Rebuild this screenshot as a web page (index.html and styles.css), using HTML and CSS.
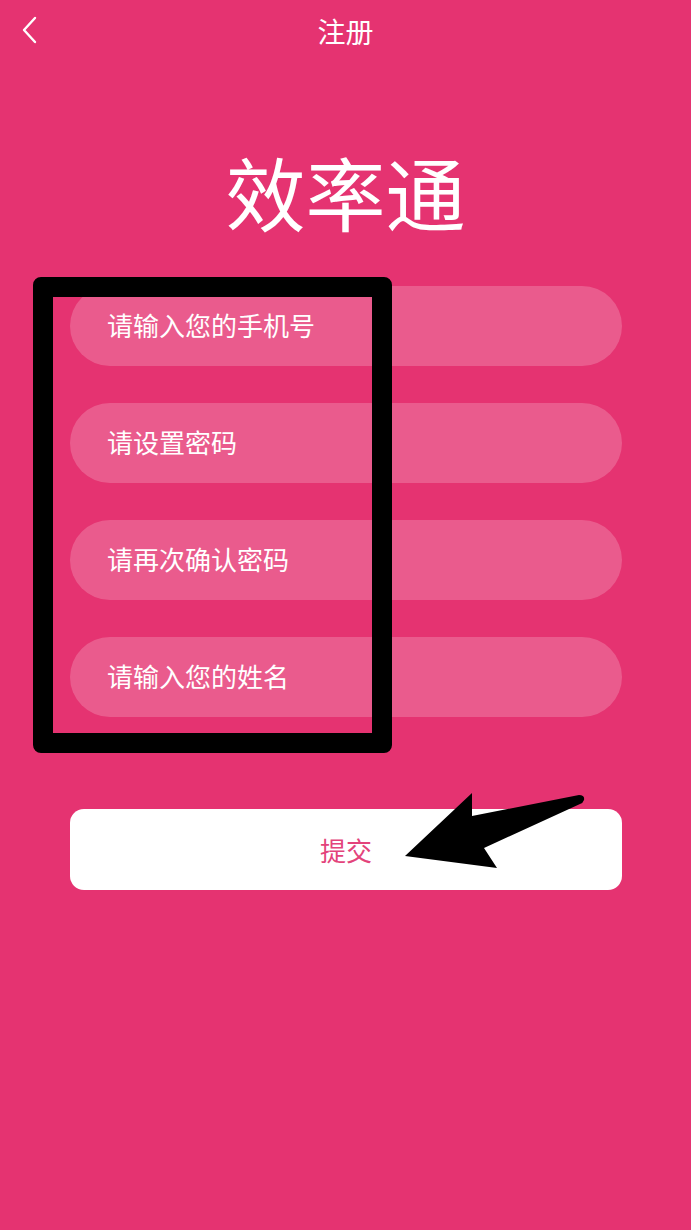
FILE: index.html
```html
<!DOCTYPE html>
<html lang="zh">
<head>
<meta charset="utf-8">
<link rel="stylesheet" href="styles.css">
</head>
<body>
<div class="page">
  <header class="topbar">
    <span class="back">
      <svg width="16" height="28" viewBox="0 0 16 28"><path d="M14 2 L3 14 L14 26" fill="none" stroke="#fff" stroke-width="2.4" stroke-linecap="round" stroke-linejoin="round"/></svg>
    </span>
    <h1 class="topbar-title">注册</h1>
  </header>
  <div class="brand">效率通</div>
  <form class="form">
    <input class="field" type="text" placeholder="请输入您的手机号">
    <input class="field" type="password" placeholder="请设置密码">
    <input class="field" type="password" placeholder="请再次确认密码">
    <input class="field" type="text" placeholder="请输入您的姓名">
    <button class="submit" type="button">提交</button>
  </form>
  <div class="mark-box"></div>
  <svg class="mark-arrow" width="691" height="1230" viewBox="0 0 691 1230"><path d="M405 856 L472 793 L472 816 L579 795 Q585 795 584 800 Q583 803 580 804 L484 848 L497 868 Z" fill="#000"/></svg>
</div>
</body>
</html>
```
FILE: styles.css
```css
html, body {
  margin: 0;
  padding: 0;
}
body {
  background: #e53371;
  font-family: "Noto Sans CJK SC", "Noto Sans", sans-serif;
  color: #fff;
}
.page {
  position: relative;
  width: 691px;
  height: 1230px;
  overflow: hidden;
}
.topbar {
  position: relative;
  height: 62px;
  display: flex;
  align-items: center;
  justify-content: center;
}
.back {
  position: absolute;
  left: 21px;
  top: 16px;
  display: flex;
}
.topbar-title {
  margin: 0;
  font-size: 28px;
  font-weight: 400;
  line-height: 1;
}
.brand {
  margin-top: 88px;
  text-align: center;
  font-size: 80px;
  line-height: 80px;
  height: 80px;
}
.form {
  margin: 56px 69px 0 70px;
  display: flex;
  flex-direction: column;
  gap: 37px;
}
.field {
  box-sizing: border-box;
  height: 80px;
  width: 100%;
  border: 0;
  border-radius: 40px;
  background: rgba(255, 255, 255, 0.2);
  padding: 0 0 3px 37px;
  font-family: inherit;
  font-size: 26px;
  color: #fff;
  outline: none;
}
.field::placeholder {
  color: #fff;
  opacity: 1;
}
.submit {
  margin-top: 55px;
  height: 81px;
  border: 0;
  border-radius: 14px;
  background: #fff;
  color: #e3437b;
  font-family: inherit;
  font-size: 26px;
}
.mark-box {
  position: absolute;
  left: 33px;
  top: 277px;
  width: 319px;
  height: 436px;
  border: 20px solid #000;
  border-radius: 8px;
}
.mark-arrow {
  position: absolute;
  left: 0;
  top: 0;
}
```
